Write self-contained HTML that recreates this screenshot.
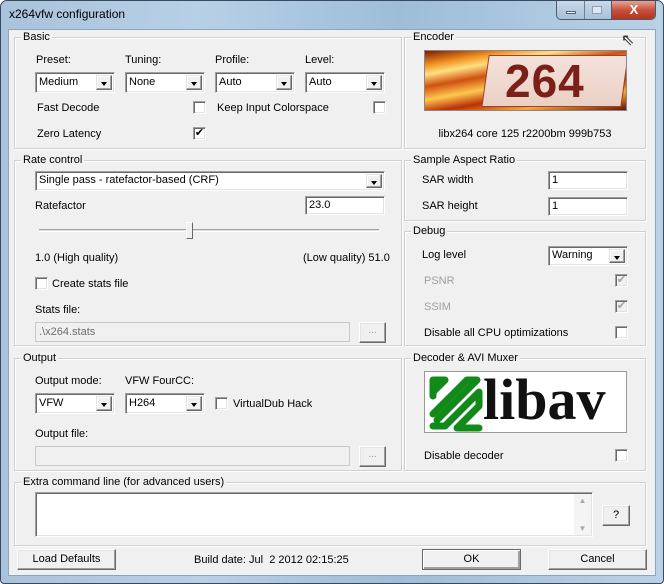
<!DOCTYPE html><html><head><style>
*{box-sizing:border-box}
body{margin:0;width:664px;height:584px;overflow:hidden;background:#fff;font-family:"Liberation Sans",sans-serif;font-size:11px;color:#000;position:relative}
.a{position:absolute}
.frame{left:0;top:0;width:664px;height:584px;border-radius:7px 7px 4px 4px;background:linear-gradient(90deg,#a9c3dc,#b7d0e6 30%,#9fbdd8 60%,#b9d1e5);border:1px solid #3a4a5e}
.client{left:8px;top:29px;width:648px;height:547px;background:#f0f0f0;border:1px solid #8da4bd}
.g{position:absolute;border:1px solid #d0d0d0;box-shadow:inset 1px 1px 0 #fff, 1px 1px 0 #fff}
.g>span{position:absolute;top:-8px;left:6px;background:#f0f0f0;padding:0 2px;line-height:14px}
.t{position:absolute;line-height:14px;white-space:nowrap}
.sunk{position:absolute;background:#fff;border:1px solid;border-color:#a0a0a0 #fff #fff #a0a0a0;box-shadow:inset 1px 1px 0 #696969,inset -1px -1px 0 #e3e3e3;padding:2px 3px;line-height:14px}
.dis{background:#f0f0f0;color:#6d6d6d}
.arr{position:absolute;right:2px;top:2px;bottom:2px;width:16px;background:#f0f0f0;border:1px solid;border-color:#e3e3e3 #696969 #696969 #e3e3e3;box-shadow:inset -1px -1px 0 #a0a0a0,inset 1px 1px 0 #fff}
.arr:after{content:"";position:absolute;left:4px;top:6px;border-left:3.5px solid transparent;border-right:3.5px solid transparent;border-top:4px solid #000}
.cb{position:absolute;width:13px;height:13px;background:#fff;border:1px solid;border-color:#a0a0a0 #fff #fff #a0a0a0;box-shadow:inset 1px 1px 0 #696969,inset -1px -1px 0 #e3e3e3;font-size:11px;line-height:11px;text-align:center}
.btn{position:absolute;background:#f0f0f0;border:1px solid;border-color:#fff #696969 #696969 #fff;box-shadow:inset -1px -1px 0 #a0a0a0,inset 1px 1px 0 #e3e3e3;text-align:center;line-height:16px}
</style></head><body>
<div class="a frame"></div>
<div class="t" style="left:9px;top:7px;font-size:12px">x264vfw configuration</div>
<div class="a" style="left:556px;top:1px;width:100px;height:19px;border:1px solid #4a5b70;border-top:none;border-radius:0 0 5px 5px;background:linear-gradient(#c8d9ea,#a9c0d8);overflow:hidden">
<div class="a" style="left:54px;top:0;width:45px;height:18px;background:linear-gradient(#e8a496,#c7523d 50%,#b8321c);border-left:1px solid #4a5b70;color:#fff;font-weight:bold;text-align:center;line-height:18px;font-size:13px">X</div>
<div class="a" style="left:27px;top:0;width:1px;height:18px;background:#6b7f96"></div>
<div class="a" style="left:9px;top:10px;width:10px;height:3px;background:#fff;border:1px solid #55657a"></div>
<div class="a" style="left:35px;top:5px;width:10px;height:8px;border:1px solid #8aa0b8;background:#dfe8f1"></div>
</div>
<div class="a client"></div>

<div class="g" style="left:14px;top:37px;width:388px;height:112px"><span>Basic</span></div>
<div class="t" style="left:36px;top:53px">Preset:</div>
<div class="t" style="left:125px;top:53px">Tuning:</div>
<div class="t" style="left:215px;top:53px">Profile:</div>
<div class="t" style="left:305px;top:53px">Level:</div>
<div class="sunk" style="left:35px;top:72px;width:80px;height:21px">Medium<div class="arr"></div></div>
<div class="sunk" style="left:125px;top:72px;width:80px;height:21px">None<div class="arr"></div></div>
<div class="sunk" style="left:215px;top:72px;width:80px;height:21px">Auto<div class="arr"></div></div>
<div class="sunk" style="left:305px;top:72px;width:80px;height:21px">Auto<div class="arr"></div></div>
<div class="t" style="left:37px;top:101px">Fast Decode</div><div class="cb" style="left:193px;top:101px"></div>
<div class="t" style="left:217px;top:101px">Keep Input Colorspace</div><div class="cb" style="left:373px;top:101px"></div>
<div class="t" style="left:37px;top:127px">Zero Latency</div><div class="cb" style="left:193px;top:127px">✔</div>

<div class="g" style="left:404px;top:37px;width:242px;height:112px"><span>Encoder</span></div>
<div class="a" style="left:424px;top:50px;width:203px;height:61px;border:1px solid #888;overflow:hidden;background:linear-gradient(170deg,#7a1a04,#f09020 15%,#ffe080 25%,#d05010 38%,#ffc850 52%,#b83006 66%,#f8a838 80%,#6a1404)">
<div class="a" style="left:60px;top:4px;width:140px;height:52px;background:linear-gradient(#f4e2dc,#ead0c4);border:1px solid #a04030;transform:skewX(-8deg)"></div>
<div class="a" style="left:80px;top:3px;font:bold 46px 'Liberation Sans',sans-serif;color:#7a2018;letter-spacing:1px">264</div></div>
<div class="t" style="left:404px;top:127px;width:242px;text-align:center">libx264 core 125 r2200bm 999b753</div>

<div class="g" style="left:14px;top:160px;width:388px;height:186px"><span>Rate control</span></div>
<div class="sunk" style="left:35px;top:171px;width:350px;height:20px;padding-top:1px">Single pass - ratefactor-based (CRF)<div class="arr"></div></div>
<div class="t" style="left:35px;top:199px">Ratefactor</div>
<div class="sunk" style="left:305px;top:196px;width:80px;height:19px;padding-top:1px">23.0</div>
<div class="a" style="left:39px;top:229px;width:340px;height:3px;border-top:1px solid #a0a0a0;border-bottom:1px solid #fff;background:#e3e3e3"></div>
<div class="a" style="left:186px;top:222px;width:7px;height:17px;background:#f0f0f0;border:1px solid;border-color:#fff #696969 #696969 #fff"></div>
<div class="t" style="left:35px;top:251px">1.0 (High quality)</div>
<div class="t" style="left:303px;top:251px">(Low quality) 51.0</div>
<div class="cb" style="left:35px;top:277px"></div><div class="t" style="left:52px;top:277px">Create stats file</div>
<div class="t" style="left:35px;top:303px">Stats file:</div>
<div class="sunk dis" style="left:35px;top:322px;width:315px;height:20px;padding-top:2px;box-shadow:none;border-color:#c8c8c8">.\x264.stats</div>
<div class="btn" style="left:359px;top:322px;width:27px;height:21px;color:#999;font-size:10px">...</div>

<div class="g" style="left:404px;top:160px;width:242px;height:61px"><span>Sample Aspect Ratio</span></div>
<div class="t" style="left:422px;top:173px">SAR width</div>
<div class="sunk" style="left:548px;top:171px;width:80px;height:19px;padding-top:1px">1</div>
<div class="t" style="left:422px;top:199px">SAR height</div>
<div class="sunk" style="left:548px;top:197px;width:80px;height:19px;padding-top:1px">1</div>

<div class="g" style="left:404px;top:231px;width:242px;height:115px"><span>Debug</span></div>
<div class="t" style="left:422px;top:248px">Log level</div>
<div class="sunk" style="left:548px;top:246px;width:80px;height:20px;padding-top:1px">Warning<div class="arr"></div></div>
<div class="t" style="left:424px;top:274px;color:#a0a0a0">PSNR</div><div class="cb" style="left:615px;top:274px;background:#f0f0f0;color:#a0a0a0">✔</div>
<div class="t" style="left:424px;top:300px;color:#a0a0a0">SSIM</div><div class="cb" style="left:615px;top:300px;background:#f0f0f0;color:#a0a0a0">✔</div>
<div class="t" style="left:424px;top:326px">Disable all CPU optimizations</div><div class="cb" style="left:615px;top:326px"></div>

<div class="g" style="left:14px;top:358px;width:388px;height:113px"><span>Output</span></div>
<div class="t" style="left:35px;top:374px">Output mode:</div>
<div class="t" style="left:125px;top:374px">VFW FourCC:</div>
<div class="sunk" style="left:35px;top:393px;width:80px;height:21px">VFW<div class="arr"></div></div>
<div class="sunk" style="left:125px;top:393px;width:80px;height:21px">H264<div class="arr"></div></div>
<div class="cb" style="left:215px;top:397px"></div><div class="t" style="left:233px;top:397px">VirtualDub Hack</div>
<div class="t" style="left:35px;top:427px">Output file:</div>
<div class="sunk dis" style="left:35px;top:446px;width:315px;height:20px;box-shadow:none;border-color:#c8c8c8"></div>
<div class="btn" style="left:359px;top:446px;width:27px;height:21px;color:#999;font-size:10px">...</div>

<div class="g" style="left:404px;top:358px;width:242px;height:113px"><span>Decoder &amp; AVI Muxer</span></div>
<div class="a" style="left:424px;top:371px;width:203px;height:62px;background:#fff;border:1px solid #999;overflow:hidden">
<svg class="a" style="left:2px;top:2px" width="58" height="58" viewBox="0 0 58 58"><path d="M6 22V6H18L6 18M6 40L40 6H50L10 46M6 52H18L52 18V32L30 54H52" fill="none" stroke="#128a1a" stroke-width="7" stroke-linecap="round" stroke-linejoin="round"/></svg>
<div class="a" style="left:58px;top:-6px;font:bold 58px 'Liberation Serif',serif;color:#111;letter-spacing:0">libav</div></div>
<div class="t" style="left:424px;top:449px">Disable decoder</div><div class="cb" style="left:615px;top:449px"></div>

<div class="g" style="left:14px;top:482px;width:632px;height:64px"><span>Extra command line (for advanced users)</span></div>
<div class="sunk" style="left:35px;top:492px;width:558px;height:45px"><div class="a" style="right:1px;top:1px;bottom:1px;width:17px;background:#f4f4f4;color:#aaa;font-size:8px;text-align:center;line-height:14px">▲<br><br>▼</div></div>
<div class="btn" style="left:602px;top:505px;width:28px;height:21px;line-height:19px">?</div>

<div class="btn" style="left:17px;top:549px;width:99px;height:21px;line-height:19px">Load Defaults</div>
<div class="t" style="left:194px;top:553px">Build date: Jul&nbsp; 2 2012 02:15:25</div>
<div class="btn" style="left:422px;top:549px;width:99px;height:21px;line-height:19px;border-color:#696969;box-shadow:inset 1px 1px 0 #fff,inset -2px -2px 0 #a0a0a0">OK</div>
<div class="btn" style="left:548px;top:549px;width:99px;height:21px;line-height:19px">Cancel</div>
<div class="a" style="left:621px;top:30px;font-size:16px;color:#222">⇖</div>
</body></html>
